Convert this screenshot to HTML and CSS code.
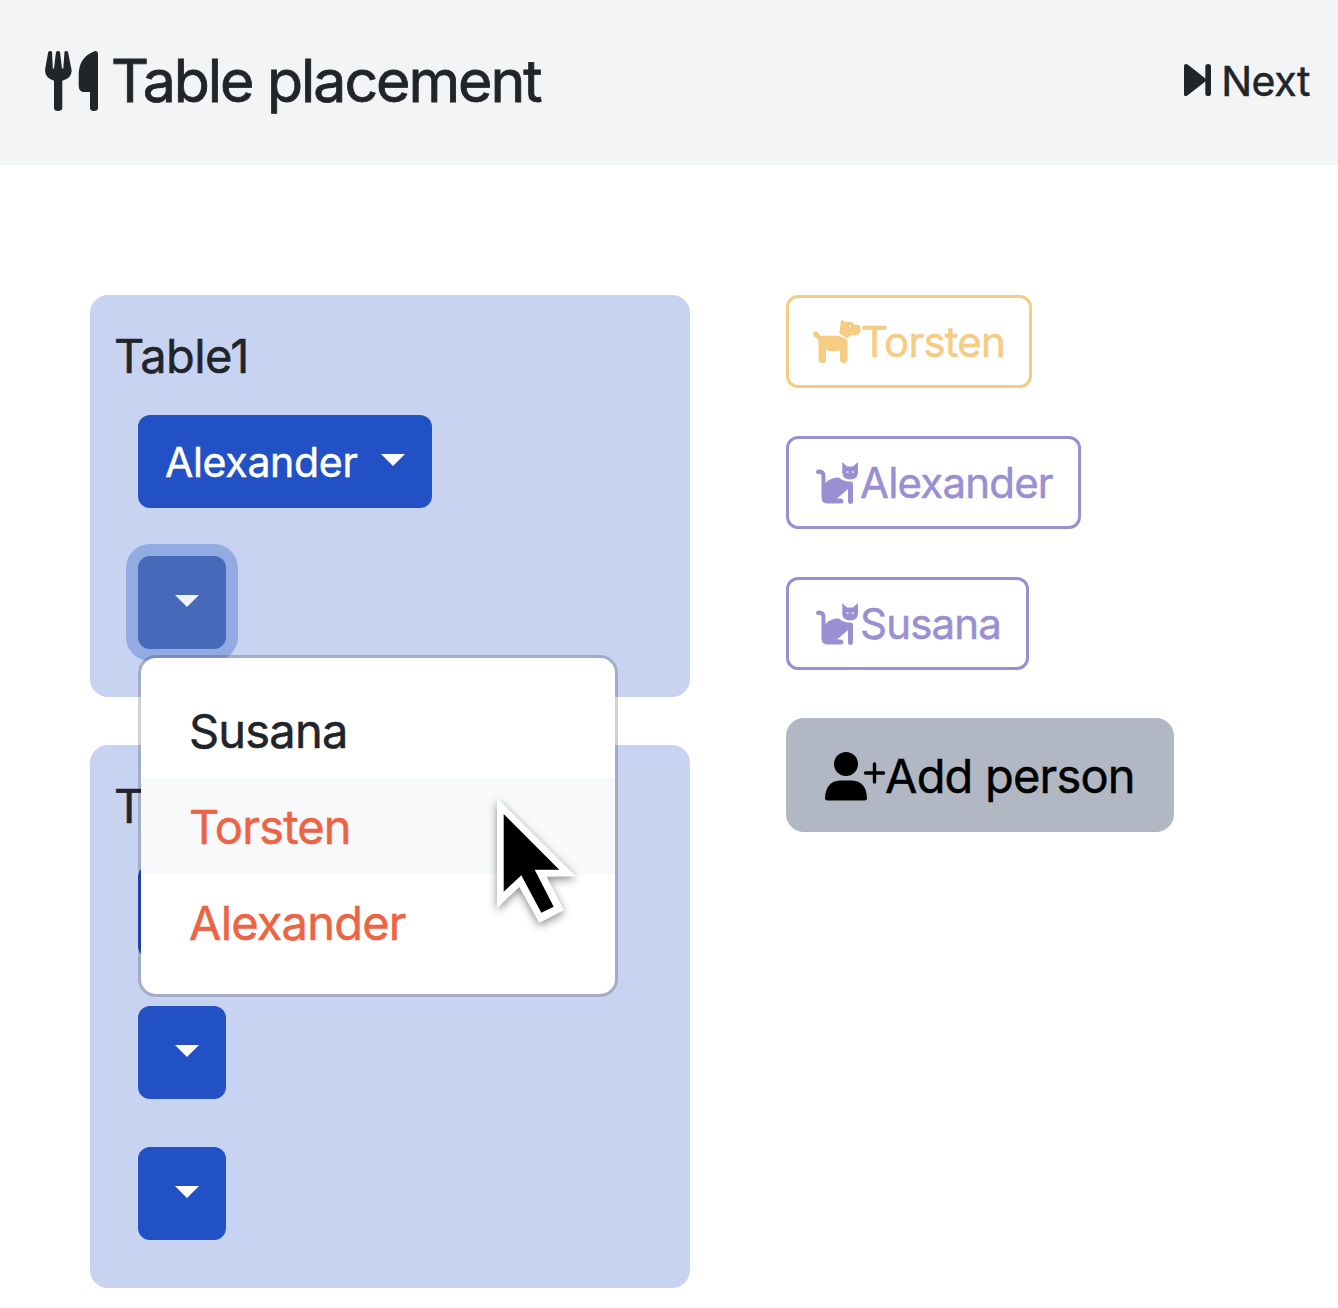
FILE: index.html
```html
<!DOCTYPE html>
<html lang="en">
<head>
<meta charset="utf-8">
<title>Table placement</title>
<link rel="stylesheet" href="styles.css">
</head>
<body>
<svg class="defs" width="0" height="0">
  <symbol id="cat" viewBox="0 0 43 42">
    <path d="M3.2 7.5Q9.5 7.5 9.5 14V21Q14 15.5 23 15.5Q26 18.5 32 19.5H35Q37 19.5 37 22V39Q37 42 34.5 42Q32 42 32 39V27L21 36.5H25Q27.5 37 27.5 39Q27.5 41.5 25 41.5H11Q5.5 41 5.5 35V14Q5.5 12 3.5 12Q0 12 0 10Q0 7.5 3.2 7.5z"/>
    <path fill-rule="evenodd" d="M26.3 0L31 4.5H37L42 0V11Q41 17.5 34.3 17.5Q27 17.5 26.3 11zM30.7 9.2V10.8H32.5V9.2zM36 9.2V10.8H37.8V9.2z"/>
  </symbol>
</svg>
<header class="topbar">
  <h1 class="brand">
    <svg class="icon-utensils" viewBox="0 0 53 60"><path d="M3.2 1Q5 -.7 7 .7L7.8 17.5H9L11 1Q13 -.8 15 1L17 17.5H18.3L19.5 .7Q21.5 -.7 23 1L26.6 19Q27 27 17.3 29.7V57Q17 60 13 60Q9 60 9 57V29.7Q0 27 0 19z"/><path d="M50 0Q53 0 53 3V57Q53 60 49 60Q45 60 45 57V41H39Q34 41 33.7 35V23Q34 6 50 0z"/></svg>
    <span>Table placement</span>
  </h1>
  <a class="next">
    <svg class="icon-next" viewBox="0 0 27 32"><path d="M0 2Q0 0 2 0Q3 0 4 .8L22 15Q23 16 22 17L4 31Q0 34 0 30z"/><rect x="21.3" width="5.7" height="32" rx="2.8"/></svg>
    <span>Next</span>
  </a>
</header>
<main class="content">
  <section class="tables">
    <div class="table-card">
      <div class="table-name">Table1</div>
      <div class="seats">
        <button class="seat seat-named"><span>Alexander</span><i class="caret"></i></button>
        <div class="dropdown">
          <button class="seat seat-open"><i class="caret"></i></button>
          <div class="menu">
            <a class="item">Susana</a>
            <a class="item taken hover">Torsten</a>
            <a class="item taken">Alexander</a>
          </div>
        </div>
      </div>
    </div>
    <div class="table-card">
      <div class="table-name">Table2</div>
      <div class="seats">
        <button class="seat"><i class="caret"></i></button>
        <button class="seat"><i class="caret"></i></button>
        <button class="seat"><i class="caret"></i></button>
      </div>
    </div>
  </section>
  <section class="people">
    <button class="person dog torsten"><svg class="icon-dog" viewBox="0 0 48 43"><path d="M1 12Q3 10 5.5 13L7.5 15.8H26L34.5 20V40Q34.5 43 31 43Q27 43 27 40V30Q20 32.5 13 30V40Q13 43 9.5 43Q5.5 43 5.5 40V20L1 16.5Q-.5 14 1 12z"/><path fill-rule="evenodd" d="M29 0L32 2H39L42 5H46Q47.5 5 47.5 10Q47 15 43 15.2H38L34 18.5L26.3 13.5L28 1zM36.2 5.8V7.6H38V5.8z"/></svg><span>Torsten</span></button>
    <button class="person cat alexander"><svg class="icon-cat"><use href="#cat"/></svg><span>Alexander</span></button>
    <button class="person cat susana"><svg class="icon-cat"><use href="#cat"/></svg><span>Susana</span></button>
    <button class="add"><svg class="icon-add" viewBox="0 0 60 49"><circle cx="21" cy="12" r="12"/><path d="M0 46Q1 29 15 28.5H27Q41 29 42 46Q42 48.5 39.5 48.5H2.5Q0 48.5 0 46z"/><path d="M49.5 12V30M40.5 21H58.5" fill="none" stroke="currentColor" stroke-width="3.4" stroke-linecap="round"/></svg><span>Add person</span></button>
  </section>
</main>
<svg class="cursor" viewBox="0 0 79 125"><path fill="#fff" d="M0 0L79 78.3L49.7 78.7L67 112L42.3 125L22.3 89L0 110.3z"/><path fill="#000" d="M6.7 16L62.3 71.7H37.7L56.7 108.7L44.3 114.7L24.3 77.3L6.7 93.7z"/></svg>
</body>
</html>
```
FILE: styles.css
```css
* { box-sizing: border-box; }
body {
  margin: 0;
  height: 1308px;
  overflow: hidden;
  background: #fff;
  color: #212529;
  font: 48px/72px Inter, "Liberation Sans", sans-serif;
  -webkit-text-stroke: .5px currentColor;
  position: relative;
}
svg { display: block; flex: none; fill: currentColor; }
.defs { position: absolute; }
button {
  font: inherit;
  border: 0;
  margin: 0;
  padding: 0;
  display: flex;
  align-items: center;
  white-space: nowrap;
}
.topbar {
  height: 165px;
  background: #f3f4f6;
  display: flex;
  justify-content: space-between;
  align-items: center;
  padding: 0 28px 3px 45px;
}
.brand {
  margin: 0;
  font-size: 59px;
  font-weight: 400;
  letter-spacing: -2.05px;
  -webkit-text-stroke-width: .8px;
  display: flex;
  align-items: center;
  gap: 13px;
}
.icon-utensils { width: 53px; height: 60px; }
.next {
  display: flex;
  align-items: center;
  gap: 10px;
  font-size: 41px;
  letter-spacing: -.4px;
}
.icon-next { width: 27px; height: 32px; margin-bottom: 2px; }
.content {
  display: flex;
  align-items: flex-start;
  gap: 96px;
  padding: 130.4px 90px 0;
}
.tables { width: 600px; display: flex; flex-direction: column; gap: 48px; }
.table-card {
  background: #c8d3f1;
  border-radius: 18px;
  padding: 24px 24px 48px;
}
.table-name { font-size: 47px; letter-spacing: -.6px; padding-top: 1px; height: 72px; }
.seats { display: flex; flex-direction: column; align-items: flex-start; gap: 48px; padding: 24px 24px 0; }
.seat {
  height: 93px;
  width: 88.4px;
  border-radius: 12px;
  background: #2251c5;
  color: #fff;
  padding: 0 27px;
  font-size: 41px;
  letter-spacing: -.3px;
  justify-content: flex-end;
}
.seat-named { width: 294px; justify-content: space-between; }
.seat-open { background: #466ab9; color: #f1f4fb; box-shadow: 0 0 0 12px #93abe3; }
.caret {
  border: 12.5px solid transparent;
  border-top-color: currentColor;
  border-bottom: 0;
  margin-bottom: 3px;
}
.dropdown { position: relative; }
.menu {
  position: absolute;
  top: 99px;
  left: 0;
  z-index: 1;
  width: 480px;
  padding: 24px 0;
  border: 3px solid rgba(0, 0, 0, .175);
  border-radius: 18px;
  background: #fff;
  background-clip: padding-box;
  display: flex;
  flex-direction: column;
}
.item { padding: 13px 48px 11px; font-size: 47px; letter-spacing: -.8px; }
.taken { color: #ed6344; }
.hover { background: #f8f9fb; }
.people { display: flex; flex-direction: column; align-items: flex-start; gap: 48px; }
.person {
  height: 93px;
  border: 3px solid currentColor;
  border-radius: 12px;
  background: #fff;
  font-size: 42px;
  letter-spacing: -.8px;
}
.person span { padding-top: 1px; }
.dog { color: #f6cb82; padding-left: 24px; }
.cat { color: #998fd2; padding-left: 27px; }
.cat span { padding-left: 1px; }
.torsten { width: 246px; }
.alexander { width: 295.4px; }
.susana { width: 243px; }
.icon-dog { width: 48px; height: 43px; }
.icon-cat { width: 43px; height: 42px; }
.add {
  width: 388.4px;
  height: 114px;
  border-radius: 18px;
  background: #b2b8c3;
  color: #000;
  padding: 2px 0 0 39px;
  font-size: 47px;
  letter-spacing: -.8px;
}
.icon-add { width: 60px; height: 49px; }
.cursor {
  position: absolute;
  left: 497px;
  top: 798px;
  z-index: 2;
  width: 79px;
  height: 125px;
  overflow: visible;
  filter: drop-shadow(0 3px 4px rgba(0, 0, 0, .45));
}
```
